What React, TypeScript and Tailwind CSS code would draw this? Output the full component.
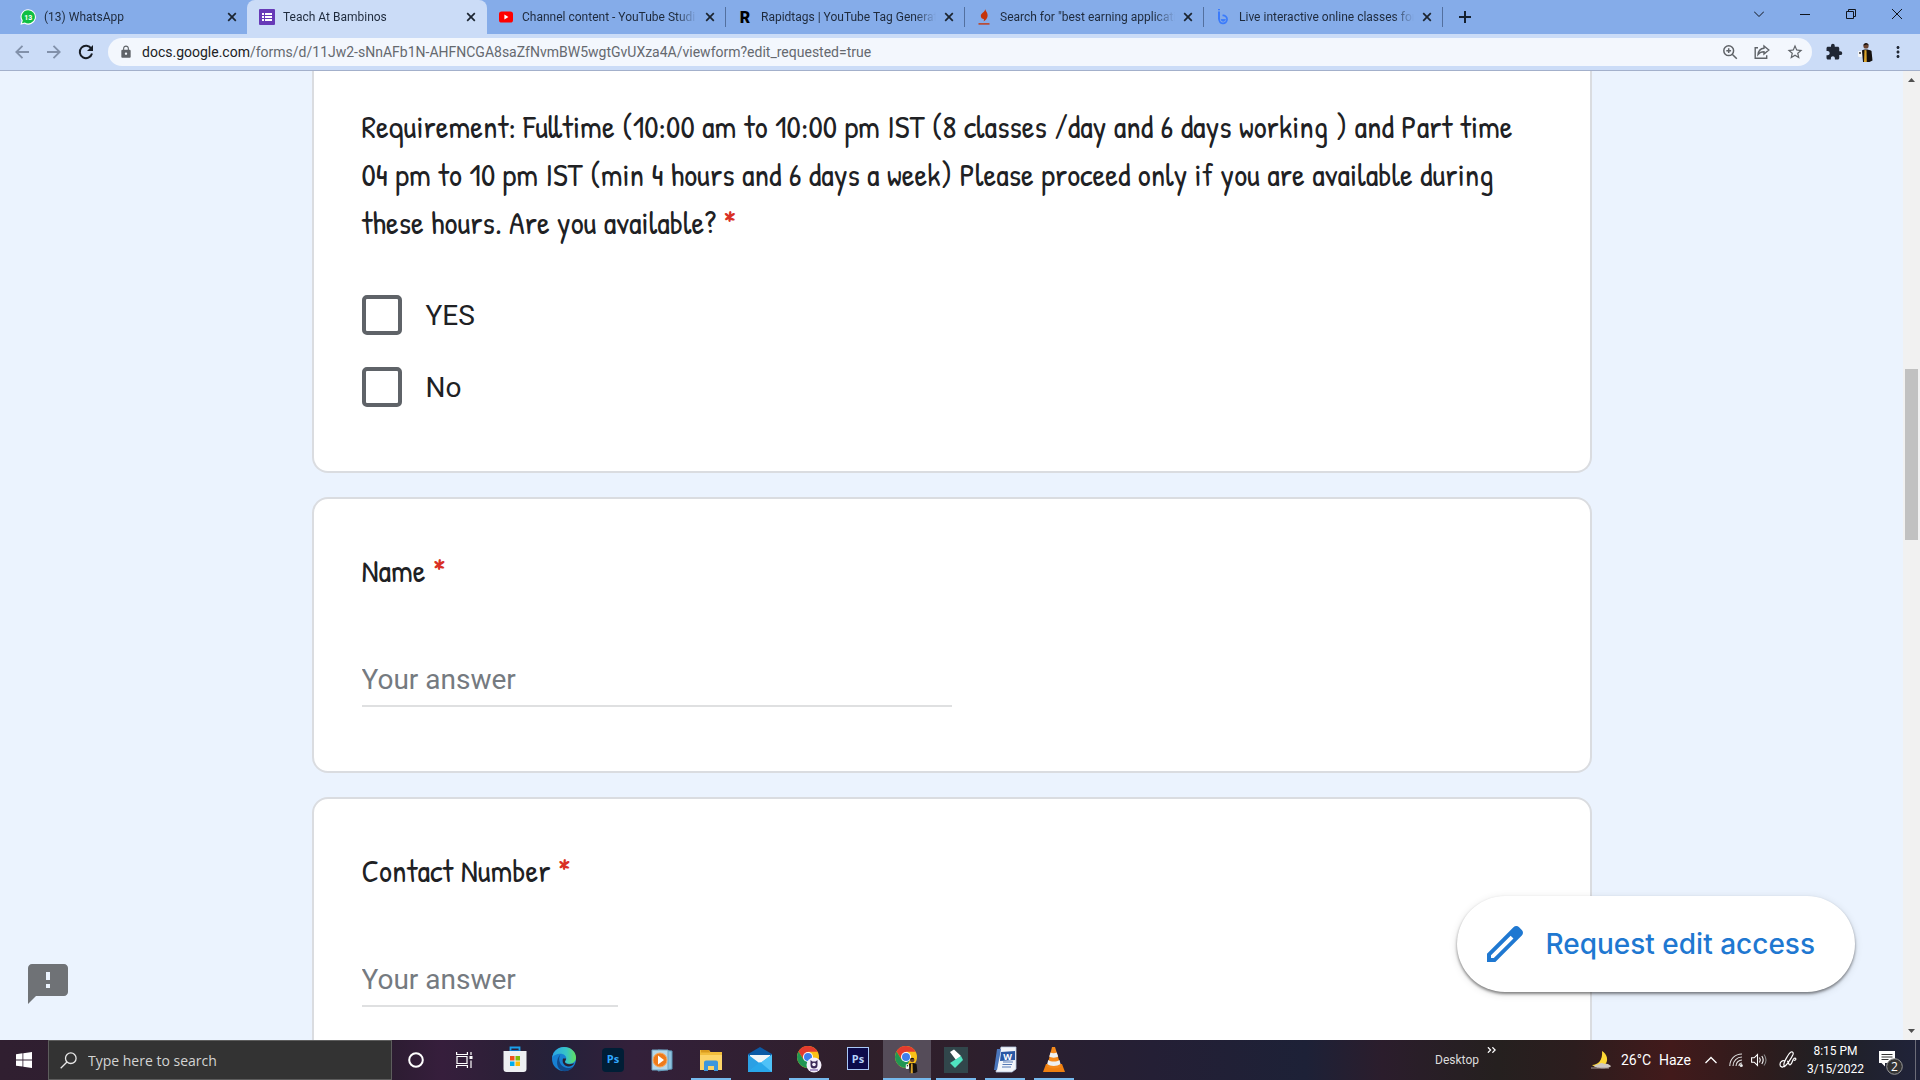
import React, { useState } from 'react';
import { MdFeedback, MdStarBorder, MdExtension, MdLock, MdMoreVert } from 'react-icons/md';

const CloseIcon = () => (
  <svg viewBox="0 0 10 10" className="h-[10px] w-[10px]" fill="none" stroke="#1b2430" strokeWidth="1.7">
    <path d="M1.2 1.2l7.6 7.6M8.8 1.2L1.2 8.8" />
  </svg>
);

const WhatsAppIcon = () => (
  <svg viewBox="0 0 16 16" className="h-4 w-4">
    <path d="M8.2.2A7.6 7.6 0 0 0 1.6 11.6L.4 15.7l4.2-1A7.7 7.7 0 1 0 8.2.2z" fill="#fff" />
    <path d="M8.2 1.3a6.5 6.5 0 0 0-5.4 10.2l-.8 2.7 2.8-.7A6.6 6.6 0 1 0 8.2 1.3z" fill="#0fbf43" />
    <text x="8.2" y="10.6" textAnchor="middle" fontSize="7" fontWeight="700" fill="#fff" fontFamily="Roboto, sans-serif">13</text>
  </svg>
);

const FormsIcon = () => (
  <svg viewBox="0 0 16 16" className="h-4 w-4">
    <rect width="16" height="16" rx="1" fill="#673ab7" />
    <path d="M3 4h2v2H3zM6 4h7v2H6zM3 7h2v2H3zM6 7h7v2H6zM3 10h2v2H3zM6 10h7v2H6z" fill="#fff" />
  </svg>
);

const YouTubeIcon = () => (
  <svg viewBox="0 0 16 16" className="h-4 w-4">
    <rect x="1" y="2.5" width="14" height="11" rx="2.6" fill="#f00" />
    <path d="M6.4 5.6v4.8L10.4 8z" fill="#fff" />
  </svg>
);

const RapidtagsIcon = () => (
  <svg viewBox="0 0 16 16" className="h-4 w-4">
    <text x="8" y="14" textAnchor="middle" fontSize="16" fontWeight="900" fill="#000" fontFamily="Roboto, sans-serif">R</text>
  </svg>
);

const FlameIcon = () => (
  <svg viewBox="0 0 16 16" className="h-4 w-4" fill="#c5350b">
    <path d="M9.300 0C9.700 2.500 12 3.800 11.600 7c-.3 2.500-1.900 4.400-4.200 5.600.6-1 .8-1.800.3-2.600C6.500 10 4.500 9 4.800 6.500 5.100 4.200 8.800 3.300 9.300 0z" />
    <path d="M2.500 14.200h11v1.400h-11z" />
  </svg>
);

const BambinosIcon = () => (
  <svg viewBox="0 0 16 16" className="h-4 w-4" fill="none" stroke="#3b7bfb">
    <path d="M4 2.500v8" strokeWidth="2" />
    <path d="M4.200 9.500a4 4 0 1 0 3.300-3" strokeWidth="1.700" />
    <path d="M6 10.500a2.300 2.300 0 0 0 4.500 0z" fill="#3b7bfb" strokeWidth=".8" />
    <path d="M3 .7h2" strokeWidth="1.200" />
  </svg>
);

const tabs = [
  { title: 'Channel content - YouTube Studi', icon: <YouTubeIcon /> },
  { title: 'Rapidtags | YouTube Tag Generat', icon: <RapidtagsIcon /> },
  { title: 'Search for "best earning applicati', icon: <FlameIcon /> },
  { title: 'Live interactive online classes for', icon: <BambinosIcon /> },
];

const TabBody = ({ icon, title }: { icon: React.ReactNode; title: string }) => (
  <>
    {icon}
    <span className="min-w-0 flex-1 overflow-hidden whitespace-nowrap [mask-image:linear-gradient(to_right,black_88%,transparent)]">
      {title}
    </span>
    <button aria-label={`Close ${title}`}><CloseIcon /></button>
  </>
);

const TabStrip = () => (
  <div className="flex h-[34px] bg-[#85ace9] font-[Roboto,sans-serif] text-[12px] text-[#1e2a3c]">
    <div className="flex w-[247px] items-center gap-2 rounded-br-lg pl-5 pr-[10px]">
      <TabBody icon={<WhatsAppIcon />} title="(13) WhatsApp" />
    </div>
    <div className="flex w-[240px] items-center gap-2 rounded-t-lg bg-[#cbdcf7] pl-3 pr-[11px]">
      <TabBody icon={<FormsIcon />} title="Teach At Bambinos" />
    </div>
    {tabs.map((tab) => (
      <div key={tab.title} className="flex w-[239px] items-center">
        <div className="flex min-w-0 flex-1 items-center gap-2 pl-[11px] pr-[10px]">
          <TabBody icon={tab.icon} title={tab.title} />
        </div>
        <div className="h-5 w-px bg-[#53709f]" />
      </div>
    ))}
    <button aria-label="New tab" className="ml-3 flex w-5 items-center justify-center">
      <svg viewBox="0 0 12 12" className="h-3 w-3" stroke="#14202f" strokeWidth="2"><path d="M6 0v12M0 6h12" /></svg>
    </button>
    <div className="ml-auto flex h-7 items-center text-[#10151d]">
      <button aria-label="Search tabs" className="flex w-[46px] justify-center">
        <svg viewBox="0 0 10 10" className="h-[10px] w-[10px]" fill="none" stroke="currentColor"><path d="M0 2.500l5 5 5-5" /></svg>
      </button>
      <button aria-label="Minimize" className="flex w-[46px] justify-center">
        <svg viewBox="0 0 10 10" className="h-[10px] w-[10px]" fill="none" stroke="currentColor"><path d="M0 5.500h10" /></svg>
      </button>
      <button aria-label="Restore" className="flex w-[46px] justify-center">
        <svg viewBox="0 0 10 10" className="h-[10px] w-[10px]" fill="none" stroke="currentColor"><path d="M.5 2.500h7v7h-7zM2.500 2.500v-2h7v7h-2" /></svg>
      </button>
      <button aria-label="Close window" className="flex w-[46px] justify-center">
        <svg viewBox="0 0 10 10" className="h-[10px] w-[10px]" fill="none" stroke="currentColor"><path d="M0 0l10 10M10 0L0 10" /></svg>
      </button>
    </div>
  </div>
);

const PersonFigure = () => (
  <>
    <path d="M5 8.500c1.500-1.500 7-1.500 9.500.5l1 9.500-3 1.500H6z" fill="#15110f" />
    <path d="M7.500 8l2 .2.300 12H7z" fill="#d9a32b" />
    <circle cx="9" cy="4" r="2.600" fill="#6b4430" />
    <path d="M6.400 3.500C6.400 0 11.700 0 11.700 3.500L10 2.600z" fill="#1a1310" />
    <rect x="1" y="9" width="4" height="6" rx="1" fill="#f4f6f8" />
    <circle cx="3" cy="11" r=".9" fill="#222" />
  </>
);

const Toolbar = () => (
  <div className="flex h-[37px] items-center border-b border-[#a3b0cb] bg-[#cbdcf7]">
    <div className="flex w-[108px] items-center gap-4 pl-[14px]">
      <button aria-label="Back">
        <svg viewBox="0 0 16 16" className="h-4 w-4" fill="none" stroke="#8291aa" strokeWidth="1.800"><path d="M15 8H2.500M8.500 1.800L2.300 8l6.200 6.200" /></svg>
      </button>
      <button aria-label="Forward">
        <svg viewBox="0 0 16 16" className="h-4 w-4" fill="none" stroke="#8291aa" strokeWidth="1.800"><path d="M1 8h12.500M7.500 1.800L13.700 8l-6.200 6.200" /></svg>
      </button>
      <button aria-label="Reload">
        <svg viewBox="0 0 16 16" className="h-4 w-4">
          <path d="M13.300 4.700A6.200 6.200 0 1 0 14 9.500" fill="none" stroke="#171c24" strokeWidth="2" />
          <path d="M15 1v6H9z" fill="#171c24" />
        </svg>
      </button>
    </div>
    <div className="flex h-7 flex-1 items-center rounded-full bg-[#f3f7fd] pl-[11px] pr-2 text-[#5f6368]">
      <MdLock className="h-[14px] w-[14px]" />
      <div className="ml-[9px] flex-1 whitespace-nowrap font-[Roboto,sans-serif] text-[14px] text-[#65696f]">
        <span className="text-[#202124]">docs.google.com</span>/forms/d/11Jw2-sNnAFb1N-AHFNCGA8saZfNvmBW5wgtGvUXza4A/viewform?edit_requested=true
      </div>
      <div className="flex items-center gap-4">
        <button aria-label="Zoom">
          <svg viewBox="0 0 16 16" className="h-4 w-4" fill="none" stroke="currentColor" strokeWidth="1.500"><circle cx="6.700" cy="6.700" r="4.900" /><path d="M10.200 10.200l4.600 4.600M4.300 6.700h4.800M6.700 4.300v4.800" /></svg>
        </button>
        <button aria-label="Share">
          <svg viewBox="0 0 16 16" className="h-4 w-4" fill="none" stroke="currentColor" strokeWidth="1.400"><path d="M4 3.800H1.200v10.500h11.500v-3" /><path d="M10 2l4.800 4-4.800 4V7.800c-3 0-4.500.8-6 2.700.4-3.500 2.500-6 6-6.300z" /></svg>
        </button>
        <button aria-label="Bookmark"><MdStarBorder className="h-[18px] w-[18px]" /></button>
      </div>
    </div>
    <div className="flex w-[108px] items-center gap-[14px] pl-[13px]">
      <button aria-label="Extensions"><MdExtension className="h-[18px] w-[18px] text-[#202734]" /></button>
      <button aria-label="Profile">
        <svg viewBox="0 0 18 20" className="h-5 w-[18px]"><PersonFigure /></svg>
      </button>
      <button aria-label="Menu"><MdMoreVert className="h-[18px] w-[18px] text-[#202734]" /></button>
    </div>
  </div>
);

const questionFont = "font-['Patrick_Hand','Liberation_Sans_Narrow',sans-serif] text-[32px] leading-[48px] text-[#202124]";

const TextQuestion = ({ id, label, fieldClass }: { id: string; label: string; fieldClass: string }) => (
  <section className="h-[276px] shrink-0 rounded-2xl border-2 border-[#dadce0] bg-white px-12 pt-12">
    <label htmlFor={id} className={`block ${questionFont}`}>
      {label} <span className="text-[#d93025]">*</span>
    </label>
    <input
      id={id}
      placeholder="Your answer"
      className={`mt-14 block h-14 border-b-2 border-[#dfe0e1] pt-0.5 font-[Roboto,sans-serif] text-[28px] text-[#202124] outline-none placeholder:text-[#757a80] ${fieldClass}`}
    />
  </section>
);

const CheckOption = ({ label }: { label: string }) => {
  const [checked, setChecked] = useState(false);
  return (
    <label className="flex h-10 items-center gap-6 font-[Roboto,sans-serif] text-[28px] text-[#202124]">
      <input
        type="checkbox"
        checked={checked}
        onChange={() => setChecked(!checked)}
        className="h-10 w-10 appearance-none rounded-[5px] border-4 border-[#5f6368] checked:bg-[#5f6368]"
      />
      <span className="pt-0.5">{label}</span>
    </label>
  );
};

const FormPage = () => (
  <div className="relative flex min-h-0 flex-1 overflow-hidden bg-[#ebf3fe]">
    <main className="flex min-w-0 flex-1 justify-center">
      <div className="flex w-[1280px] flex-col gap-6">
        <section className="shrink-0 rounded-b-2xl border-x-2 border-b-2 border-[#dadce0] bg-white px-12 pb-16 pt-8">
          <h2 className={questionFont}>
            Requirement: Fulltime (10:00 am to 10:00 pm IST (8 classes /day and 6 days working ) and Part time<br />
            04 pm to 10 pm IST (min 4 hours and 6 days a week) Please proceed only if you are available during<br />
            these hours. Are you available? <span className="text-[#d93025]">*</span>
          </h2>
          <div className="mt-12 flex flex-col gap-8">
            <CheckOption label="YES" />
            <CheckOption label="No" />
          </div>
        </section>
        <TextQuestion id="name" label="Name" fieldClass="w-1/2" />
        <TextQuestion id="contact" label="Contact Number" fieldClass="w-64" />
      </div>
    </main>

    {/* Scrollbar */}
    <div className="flex w-[17px] flex-col items-center bg-[#f1f1f1]">
      <svg viewBox="0 0 17 17" className="h-[17px] w-[17px]"><path d="M5 11h7L8.500 7z" fill="#505050" /></svg>
      <div className="mt-[281px] h-[171px] w-[13px] bg-[#c1c1c1]" />
      <svg viewBox="0 0 17 17" className="mt-auto h-[17px] w-[17px]"><path d="M5 6h7l-3.500 4z" fill="#505050" /></svg>
    </div>

    <button aria-label="Report a problem" className="absolute bottom-8 left-6 text-[#6f7276]">
      <MdFeedback className="h-12 w-12" />
    </button>
    <button className="absolute bottom-12 right-[65px] flex h-24 items-center gap-4 rounded-full bg-white pl-6 pr-10 font-['Google_Sans',Inter,sans-serif] text-[28px] font-medium text-[#1f78d1] shadow-[0_2px_3px_rgba(0,0,0,0.45),0_2px_8px_rgba(0,0,0,0.12)]">
      <svg viewBox="0 0 24 24" className="h-12 w-12" fill="currentColor">
        <path d="M20.410 4.940l-1.350-1.350c-.78-.78-2.050-.78-2.830 0L3 16.820V21h4.180L20.410 7.770c.79-.78.79-2.050 0-2.830zm-14 14.120L5 19v-1.360l9.820-9.820 1.410 1.410-9.820 9.830z" />
      </svg>
      Request edit access
    </button>
  </div>
);

const StoreIcon = () => (
  <svg viewBox="0 0 24 28" className="h-7 w-6">
    <path d="M7.500 8V2.500h9V8" fill="none" stroke="#1aa0ea" strokeWidth="1.800" />
    <path d="M.5 6h23v18a3 3 0 0 1-3 3h-17a3 3 0 0 1-3-3z" fill="#eef0f2" />
    <path d="M7.500 5.500h9" stroke="#1272c4" strokeWidth="1" />
    <path d="M7 11h4.500v4.500H7z" fill="#f1511b" /><path d="M12.500 11H17v4.500h-4.500z" fill="#80bc06" />
    <path d="M7 16.500h4.500V21H7z" fill="#00adef" /><path d="M12.500 16.500H17V21h-4.500z" fill="#fbbc09" />
  </svg>
);

const EdgeIcon = () => (
  <svg viewBox="0 0 24 28" className="h-7 w-6">
    <defs>
      <linearGradient id="edgeTop" x1="0" x2="1"><stop stopColor="#2ba5e6" /><stop offset=".6" stopColor="#38c5c5" /><stop offset="1" stopColor="#63e05c" /></linearGradient>
    </defs>
    <circle cx="12" cy="14" r="12" fill="#1780d2" />
    <path d="M.2 13C1 6 6 2 12 2c7 0 12 5 12 10.500 0 4-3 6.200-6.500 6.200-3 0-4.500-1-4.500-2 0-.8 1.300-1.300 1.300-3.200 0-2.600-2.400-4.800-5.800-4.800C4.500 8.700 1 10.500.2 13z" fill="url(#edgeTop)" />
    <path d="M9 9c-3 3-2.500 10 3 13 3.500 2 7.500 1 9.500-.7C19 25 15 27 11 26 4 24.500 3 14 9 9z" fill="#114a8b" />
    <path d="M14 13.500c0 2-1.200 2.300-1 3.500.3 1.300 2 2.200 4.500 2.200 2 0 4-.7 4.800-1.200-1 2.500-4 4-6.500 3.500-4-.7-6-4.500-4.800-8z" fill="#2b2030" />
  </svg>
);

const PsRound = () => (
  <svg viewBox="0 0 24 28" className="h-7 w-6">
    <rect x="1" y="3" width="22" height="24" rx="4" fill="#001e36" />
    <text x="12" y="18" textAnchor="middle" fontSize="11" fontWeight="700" fill="#31a8ff" fontFamily="Open Sans, sans-serif">Ps</text>
  </svg>
);

const MediaPlayerIcon = () => (
  <svg viewBox="0 0 24 28" className="h-7 w-6">
    <path d="M8 5l14 1v18l-14 2z" fill="#8fc3de" stroke="#5b93b4" /><path d="M2 5h16v20H2z" fill="#b6d8ea" stroke="#6ea3c2" />
    <circle cx="10" cy="15" r="7" fill="#ef7b1a" stroke="#f9a95e" /><path d="M8 10.500v9l6-4.500z" fill="#fff" />
  </svg>
);

const ExplorerIcon = () => (
  <svg viewBox="0 0 24 28" className="h-7 w-6">
    <path d="M1 5h9l1.500 2H23v18H1z" fill="#f1bd3c" /><path d="M1 10h22v15H1z" fill="#fcd468" /><path d="M2 5h8l1 2.500H2z" fill="#d99b1e" />
    <path d="M5 26v-8.500a2 2 0 0 1 2-2h10a2 2 0 0 1 2 2V26h-4v-5H9v5z" fill="#3e97dc" />
  </svg>
);

const MailIcon = () => (
  <svg viewBox="0 0 24 28" className="h-7 w-6">
    <path d="M0 9l12-7 12 7v3H0z" fill="#0c59a4" /><path d="M2 10h20v9H2z" fill="#f3f5f7" />
    <path d="M0 9.500l12 9L24 9.500V27H0z" fill="#2ba0e4" /><path d="M0 27l13-9.500L24 9.500V27z" fill="#4fc2f8" />
    <path d="M0 27l12-10 12 10z" fill="#29a7ea" />
  </svg>
);

const ChromeIcon = ({ person = false }: { person?: boolean }) => (
  <svg viewBox="0 0 26 30" className="h-[30px] w-[26px]">
    <circle cx="12" cy="13" r="11" fill="#fbc116" />
    <path d="M2.500 7.500A11 11 0 0 1 21.600 7.800H12L7.500 15.600z" fill="#e33b2e" />
    <path d="M2.500 7.500A11 11 0 0 0 11.500 24l4.700-8.500H7.500z" fill="#219653" />
    <circle cx="12" cy="13" r="5" fill="#fff" /><circle cx="12" cy="13" r="4" fill="#3f7fee" />
    {person ? (
      <g transform="translate(11 13) scale(.8)"><PersonFigure /></g>
    ) : (
      <>
        <circle cx="18" cy="21" r="7.500" fill="#f5effb" />
        <path d="M14.500 16l2 1.500h3l2-1.500v5a3.500 3.500 0 0 1-7 0z" fill="#3b2857" />
        <circle cx="18" cy="20.500" r="1.800" fill="#f5effb" /><path d="M14 26h8" stroke="#7c62ab" strokeWidth="1.200" />
      </>
    )}
  </svg>
);

const PsSquare = () => (
  <svg viewBox="0 0 24 28" className="h-7 w-6">
    <rect x="1.500" y="2.500" width="21" height="22" fill="#0c0a4a" stroke="#a9c8f7" />
    <text x="12" y="17.500" textAnchor="middle" fontSize="11" fontWeight="700" fill="#b4d3fb" fontFamily="Open Sans, sans-serif">Ps</text>
  </svg>
);

const FilmoraIcon = () => (
  <svg viewBox="0 0 24 28" className="h-7 w-6">
    <rect x="0" y="2" width="24" height="26" fill="#31464b" />
    <path d="M6 7l4-2.500 7 6.500-5 4z" fill="#fff" /><path d="M17 11l2 4-8 8-5-5z" fill="#4fe3c0" />
  </svg>
);

const WordIcon = () => (
  <svg viewBox="0 0 24 28" className="h-7 w-6">
    <path d="M8 2h15v22l-4 3H3z" fill="#f2f5fa" stroke="#b8c7df" strokeWidth=".8" />
    <path d="M10 17h10M9.500 19.500H19M9 22h9" stroke="#567ab5" strokeWidth="1.200" />
    <path d="M4 4h4L4 25H1z" fill="#4a76bd" /><path d="M8 7l14-1v9L7 16z" fill="#2957a4" />
    <text x="14.500" y="14.500" textAnchor="middle" fontSize="9" fontWeight="700" fill="#fff" fontFamily="Open Sans, sans-serif">W</text>
  </svg>
);

const VlcIcon = () => (
  <svg viewBox="0 0 24 28" className="h-7 w-6">
    <path d="M4 19h16l3 8H1z" fill="#f08010" /><path d="M10 2h3l6 19.500c-3 2.500-11 2.500-14 0z" fill="#f58a1c" />
    <path d="M8.500 7.500l-1.300 4c2 1.500 7 1.500 9 0l-1.500-4c-1.500 1-4.700 1-6.200 0zM6.200 15l-1 4c3 2.500 10 2.500 13.300 0l-1-4c-3 2-8.500 2-11.300 0z" fill="#eef0f0" />
  </svg>
);

const apps = [
  { name: 'Microsoft Store', icon: <StoreIcon />, mark: '' },
  { name: 'Edge', icon: <EdgeIcon />, mark: '' },
  { name: 'Photoshop', icon: <PsRound />, mark: '' },
  { name: 'Media Player', icon: <MediaPlayerIcon />, mark: '' },
  { name: 'File Explorer', icon: <ExplorerIcon />, mark: 'open' },
  { name: 'Mail', icon: <MailIcon />, mark: '' },
  { name: 'Chrome', icon: <ChromeIcon />, mark: 'open' },
  { name: 'Photoshop CS6', icon: <PsSquare />, mark: '' },
  { name: 'Chrome profile', icon: <ChromeIcon person />, mark: 'active' },
  { name: 'Filmora', icon: <FilmoraIcon />, mark: 'open' },
  { name: 'Word', icon: <WordIcon />, mark: 'open' },
  { name: 'VLC', icon: <VlcIcon />, mark: 'open' },
];

const markClass: Record<string, string> = {
  '': 'border-transparent w-10',
  open: 'border-[#76b9ed] w-10',
  active: 'border-[#76b9ed] w-12 bg-[#554c59]',
};

const Taskbar = () => (
  <footer className="flex h-10 items-stretch bg-[linear-gradient(to_right,#301f30_0%,#2b1c30_20%,#361e3c_23%,#2a2036_27%,#24213a_29%,#33203a_33%,#2f1f2a_45%,#2e1f2c_50%,#241f35_60%,#1d2137_68%,#2b1d2c_72%,#25201f_78%,#2c1d1e_82%,#421a1b_87%,#2d1c1d_92%,#202024_95%,#20233a_100%)] text-white">
    <button aria-label="Start" className="flex w-12 items-center justify-center">
      <svg viewBox="0 0 16 16" className="h-4 w-4" fill="#fff"><path d="M0 2.200l6.500-.9v6.200H0zM7.300 1.200L16 0v7.500H7.300zM0 8.400h6.500v6.200L0 13.700zM7.300 8.400H16V16l-8.700-1.200z" /></svg>
    </button>
    <div className="flex w-[344px] items-center gap-[11px] border border-[#5d5d5d] bg-[#333] pl-[11px]">
      <svg viewBox="0 0 17 17" className="h-[17px] w-[17px]" fill="none" stroke="#e8e8e8" strokeWidth="1.300"><circle cx="10.800" cy="6.200" r="5.300" /><path d="M7 10L.7 16.300" /></svg>
      <input aria-label="Search" placeholder="Type here to search" className="min-w-0 flex-1 bg-transparent text-[14px] outline-none placeholder:text-[#d4d4d4]" />
    </div>
    <button aria-label="Cortana" className="flex w-12 items-center justify-center">
      <svg viewBox="0 0 16 16" className="h-4 w-4" fill="none" stroke="#fff" strokeWidth="2"><circle cx="8" cy="8" r="6.800" /></svg>
    </button>
    <button aria-label="Task view" className="mr-[3px] flex w-12 items-center justify-center">
      <svg viewBox="0 0 17 16" className="h-4 w-[17px]" fill="none" stroke="#fff" strokeWidth="1.200"><path d="M1 4.500h10v7H1zM.6 0v2.500h10.800V0M.6 16v-2.500h10.800V16M15 0v3M15 8.500V16" /><path d="M13.500 4h3v3h-3z" fill="#fff" stroke="none" /></svg>
    </button>
    <div className="flex gap-px">
      {apps.map((app) => (
        <div key={app.name} className="flex w-12 justify-center">
          <button aria-label={app.name} className={`flex items-center justify-center border-b-2 ${markClass[app.mark]}`}>
            {app.icon}
          </button>
        </div>
      ))}
    </div>

    {/* System tray */}
    <div className="ml-auto flex items-center">
      <span className="font-[Roboto,sans-serif] text-[12px] text-[#dcdcdc]">Desktop</span>
      <svg viewBox="0 0 10 6" className="mb-5 ml-2 h-[6px] w-[9px]" fill="none" stroke="#fff" strokeWidth="1.400"><path d="M1 0l3 3-3 3M6 0l3 3-3 3" /></svg>
      <svg viewBox="0 0 22 20" className="ml-[94px] h-5 w-[22px]">
        <path d="M12 1c5 3 7 9 3 14-3 3-9 3-13 0 6 0 11-5 10-14z" fill="#fdd835" />
        <path d="M4 16c2-2 4-1 5-2 3-2 5 0 6 0 3-1 4 1 6 2-1 3-15 3-17 0z" fill="#cfc8c4" /><path d="M1 18h18" stroke="#a89e9a" />
      </svg>
      <span className="ml-[9px] w-[38px] font-[Roboto,sans-serif] text-[14px]">26°C</span>
      <span className="w-[43px] font-[Roboto,sans-serif] text-[14px]">Haze</span>
      <div className="flex items-center gap-2 pl-[3px]">
        <svg viewBox="0 0 12 8" className="h-2 w-3" fill="none" stroke="#fff" strokeWidth="1.300"><path d="M.5 7L6 1.500 11.500 7" /></svg>
        <svg viewBox="0 0 14 14" className="ml-1 h-[14px] w-[14px]" fill="none" stroke="#ddd" strokeWidth="1.100">
          <path d="M.8 13C.8 6 6 1 13 1M4 13c0-5 4-9 9-9M7 13c0-3.300 2.700-6 6-6M10 13c0-1.700 1.300-3 3-3" /><circle cx="12.300" cy="12.500" r="1" fill="#fff" />
        </svg>
        <svg viewBox="0 0 16 14" className="h-[14px] w-4" fill="none" stroke="#fff" strokeWidth="1.100"><path d="M.6 4.800h2.600L6.500 1.500v11L3.200 9.200H.6zM8.500 4.500q1.600 2.500 0 5M10.800 3q2.800 4 0 8" /><path d="M13 1.500q4 5.500 0 11" stroke="#888" /></svg>
        <svg viewBox="0 0 18 18" className="ml-1 h-[18px] w-[18px]" fill="none" stroke="#fff" strokeWidth="1.200"><path d="M5 14C4 12 10 2 12 1c2-.5 2.500 1 2 2.500C13 6 8 14 5.500 15.500zM6 10c-3-1-5 1-5 3.500S4 17 5 15M8 10c2 0 1 4 3 4 3-1 2-7 5-7 2 1 0 3-1 2" /></svg>
      </div>
      <div className="mr-1 flex w-[77px] flex-col items-center font-[Roboto,sans-serif] text-[12px] leading-[18px]">
        <span>8:15 PM</span>
        <span>3/15/2022</span>
      </div>
      <button aria-label="Notifications" className="mr-3 pt-1">
        <svg viewBox="0 0 25 25" className="h-[25px] w-[25px]">
          <path d="M1 1h16v12H7v3.500L3.500 13H1z" fill="#fff" /><path d="M3.500 4.500h11M3.500 7h11M3.500 9.500h7" stroke="#333" strokeWidth="1" />
          <circle cx="16.500" cy="16.500" r="7.800" fill="#333" stroke="#999" />
          <text x="16.500" y="20.700" textAnchor="middle" fontSize="12" fill="#fff" fontFamily="Open Sans, sans-serif">2</text>
        </svg>
      </button>
      <div className="mr-1 h-10 w-px bg-[#6c6c78]" />
    </div>
  </footer>
);

export default function App() {
  return (
    <div className="flex h-screen flex-col overflow-hidden font-['Segoe_UI','Open_Sans',sans-serif]">
      <TabStrip />
      <Toolbar />
      <FormPage />
      <Taskbar />
    </div>
  );
}
